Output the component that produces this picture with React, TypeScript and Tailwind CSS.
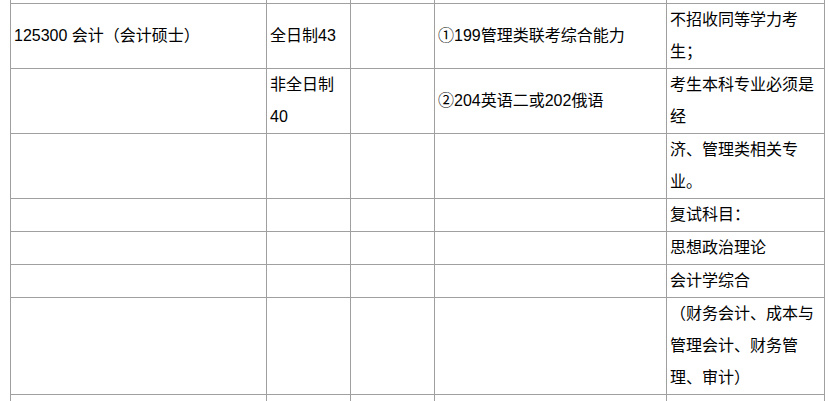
import React from 'react';

const font = { fontFamily: '"Liberation Sans", "Noto Sans CJK SC", sans-serif' };

// 每一行五列，空字符串为空单元格
const rows: React.ReactNode[][] = [
  ['', '', '', '', ''],
  ['125300 会计（会计硕士）', '全日制43', '', '①199管理类联考综合能力', <>不招收同等学力考<br />生；</>],
  ['', <>非全日制<br />40</>, '', '②204英语二或202俄语', <>考生本科专业必须是<br />经</>],
  ['', '', '', '', <>济、管理类相关专<br />业。</>],
  ['', '', '', '', '复试科目：'],
  ['', '', '', '', '思想政治理论'],
  ['', '', '', '', '会计学综合'],
  ['', '', '', '', <>（财务会计、成本与<br />管理会计、财务管<br />理、审计）</>],
  ['', '', '', '', ''],
];

function Cell({ children }: { children: React.ReactNode }) {
  return (
    <div className="bg-white flex items-center px-[3px] text-[16px] leading-8 text-black whitespace-nowrap overflow-hidden">
      <div>{children}</div>
    </div>
  );
}

export default function App() {
  return (
    <div className="w-[830px] h-[401px] overflow-hidden bg-white" style={font}>
      <div className="ml-[10px] w-[815px] bg-[#a0a0a0] px-px pb-px grid grid-cols-[255px_83px_83px_231px_157px] grid-rows-[3px_64px_64px_64px_32px_32px_32px_96px_32px] gap-px">
        {rows.map((row, i) =>
          row.map((cell, j) => <Cell key={`${i}-${j}`}>{cell}</Cell>)
        )}
      </div>
    </div>
  );
}
